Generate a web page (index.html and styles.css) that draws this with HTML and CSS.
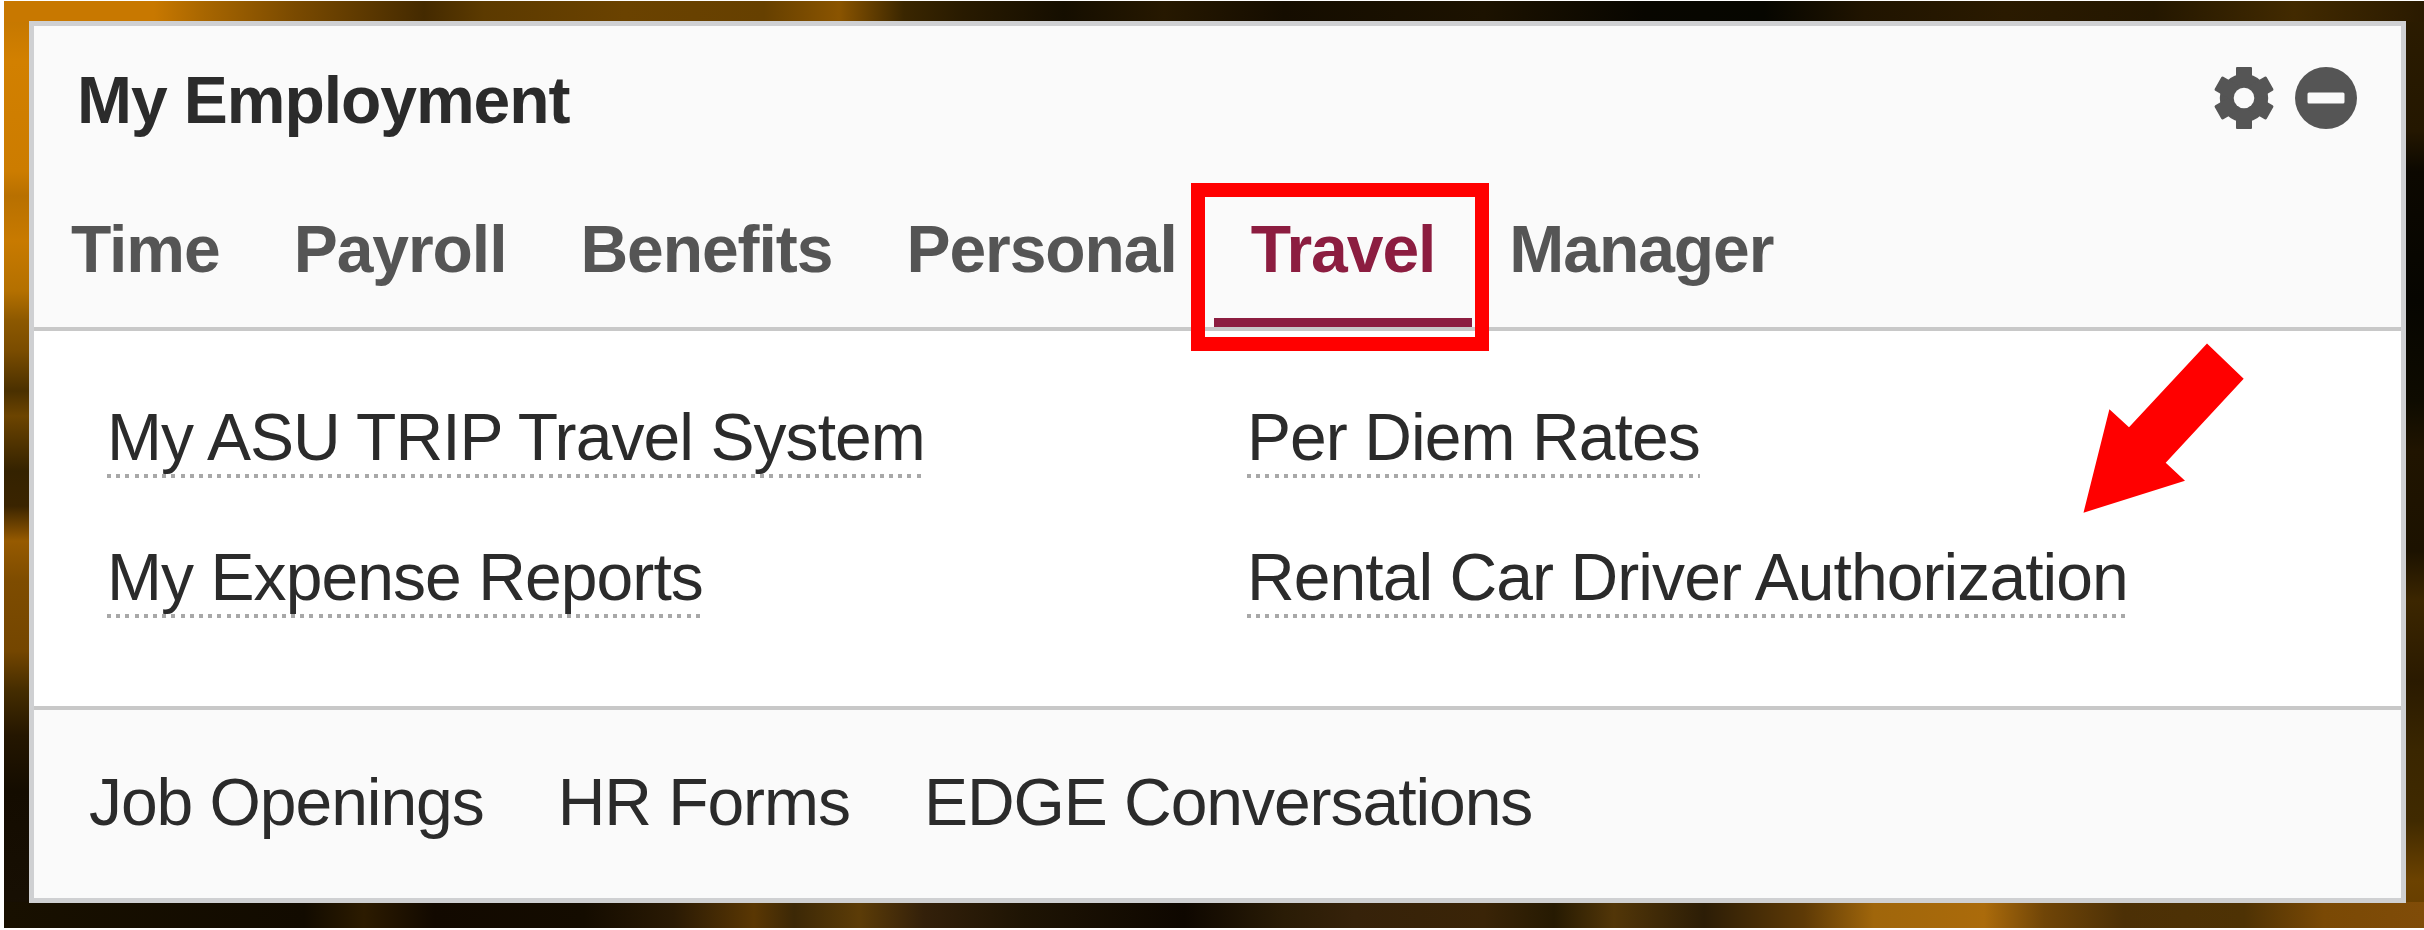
FILE: index.html
```
<!DOCTYPE html>
<html lang="en">
<head>
<meta charset="utf-8">
<title>My Employment</title>
<link rel="stylesheet" href="styles.css">
</head>
<body>
<div class="wallpaper">
  <section class="panel">
    <header class="panel-head">
      <div class="title-row">
        <h1 class="title">My Employment</h1>
        <div class="tools">
          <svg class="gear" viewBox="-31 -31 62 62" aria-label="Settings">
            <defs><mask id="hole"><rect x="-31" y="-31" width="62" height="62" fill="#fff"/><circle r="10.3" fill="#000"/></mask></defs>
            <g mask="url(#hole)" fill="#555">
              <circle r="24.2"/>
              <rect x="-8" y="-31" width="16" height="62" rx="1"/>
              <rect x="-8" y="-30" width="16" height="60" rx="1.5" transform="rotate(60)"/>
              <rect x="-8" y="-30" width="16" height="60" rx="1.5" transform="rotate(120)"/>
            </g>
          </svg>
          <svg class="minus" viewBox="-31 -31 62 62" aria-label="Collapse">
            <circle r="31" fill="#555"/>
            <rect x="-18.5" y="-5.5" width="37" height="11" rx="1.5" fill="#fafafa"/>
          </svg>
        </div>
      </div>
      <nav class="tabs">
        <a class="tab">Time</a>
        <a class="tab">Payroll</a>
        <a class="tab">Benefits</a>
        <a class="tab">Personal</a>
        <a class="tab active">Travel<span class="highlight"></span></a>
        <a class="tab">Manager</a>
      </nav>
    </header>
    <div class="links">
      <a class="link">My ASU TRIP Travel System</a>
      <a class="link">Per Diem Rates</a>
      <a class="link">My Expense Reports</a>
      <a class="link">Rental Car Driver Authorization</a>
      <svg class="arrow" viewBox="2083 343 162 171"><path fill="#f00" d="M2207 343.5 2243.7 378.7 2165.7 462.7 2185 480.7 2083.5 512.7 2109.4 409.3 2129 427.3Z"/></svg>
    </div>
    <footer class="foot">
      <a>Job Openings</a>
      <a>HR Forms</a>
      <a>EDGE Conversations</a>
    </footer>
  </section>
</div>
</body>
</html>
```
FILE: styles.css
```
* { box-sizing: border-box; }
body {
  margin: 0;
  width: 2424px;
  height: 930px;
  padding: 1px 0 2px 4px;
  overflow: hidden;
  background: #fff;
  font: 66px/76px "Liberation Sans", Arial, sans-serif;
  letter-spacing: -0.93px;
  color: #2b2b2b;
}
.wallpaper {
  height: 927px;
  padding: 20px 18px 25px 25px;
  background:
    linear-gradient(90deg, #c87800 0, #c87800 150px, #a86600 200px, #7a4a00 290px, #442a00 420px, #5c3a00 480px, #6a4200 620px, #664000 760px, #8a5400 835px, #3a2600 900px, #281a00 960px, #150e00 1060px, #261800 1160px, #150d00 1280px, #1c1200 1480px, #080600 1640px, #060600 1760px, #201400 1860px, #2a1a00 2000px, #241700 2150px, #422a00 2290px, #2a1a00 2420px) top / 100% 21px no-repeat,
    linear-gradient(90deg, #181000 0, #120b00 300px, #2c1b00 360px, #120900 430px, #140c00 580px, #2a1a04 670px, #5a3703 750px, #3c2806 790px, #5c3c07 855px, #33200a 920px, #1e1404 1020px, #0e0700 1180px, #2a1c06 1280px, #36220a 1350px, #3a2407 1480px, #261a02 1550px, #523608 1610px, #2c1d06 1700px, #5e3a06 1800px, #a0660b 1870px, #ab6b0b 1980px, #704507 2040px, #4c3006 2120px, #4e3204 2240px, #7a4905 2320px, #804c08 2420px) bottom / 100% 26px no-repeat,
    linear-gradient(#c07400 0, #d28000 60px, #cc7c00 170px, #b87000 195px, #c87a00 240px, #b47000 290px, #8c5800 320px, #7a4c00 350px, #4a3000 390px, #6c4400 415px, #342200 470px, #3a2400 505px, #965a00 540px, #7e4c00 580px, #744600 650px, #442c00 690px, #241600 735px, #140c00 790px, #181004 927px) left / 26px 100% no-repeat,
    linear-gradient(#2c1c00 0, #241700 130px, #0c0800 170px, #060500 300px, #0e0b00 400px, #201400 450px, #1c1200 550px, #3c2600 600px, #2a1a00 680px, #3a2600 750px, #402a00 820px, #6c4200 880px, #643c00 927px) right / 20px 100% no-repeat;
}
.panel {
  height: 882px;
  border: 5px solid #cfd0d2;
  background: #fff;
  display: flex;
  flex-direction: column;
}
.panel-head {
  height: 305px;
  padding-top: 36px;
  border-bottom: 4px solid #c8c8c8;
  background: #fafafa;
}
.title-row {
  display: flex;
  justify-content: space-between;
  height: 149px;
  padding: 0 44px 0 43px;
}
.title { margin: 0; font-size: 66px; line-height: 76px; letter-spacing: -1.05px; }
.tools { display: flex; gap: 20px; padding-top: 5px; }
.tools svg { width: 62px; height: 62px; }
.tabs { display: flex; font-weight: bold; letter-spacing: -1.05px; color: #555; }
.tab { position: relative; height: 116px; padding: 0 37px; white-space: nowrap; }
.tab.active { color: #8c1d40; border-bottom: 9px solid #8c1d40; }
.highlight {
  position: absolute;
  left: -23px;
  top: -28px;
  width: 298px;
  height: 168px;
  border: 14px solid #f00;
}
.links {
  position: relative;
  display: grid;
  grid-template-columns: 1140px 1fr;
  grid-auto-rows: 140px;
  height: 375px;
  padding: 68px 0 0 73px;
}
.link {
  justify-self: start;
  align-self: start;
  height: 79px;
  white-space: nowrap;
  background: repeating-linear-gradient(90deg, #a8a8a8 0 4px, transparent 4px 9.2px) bottom / 100% 4px no-repeat;
}
.arrow { position: absolute; left: 2049px; top: 12px; width: 162px; height: 171px; }
.foot {
  flex: 1;
  display: flex;
  gap: 74px;
  padding: 54px 0 0 55px;
  border-top: 4px solid #c8c8c8;
  background: #fafafa;
  letter-spacing: -1.05px;
  white-space: nowrap;
}
```
